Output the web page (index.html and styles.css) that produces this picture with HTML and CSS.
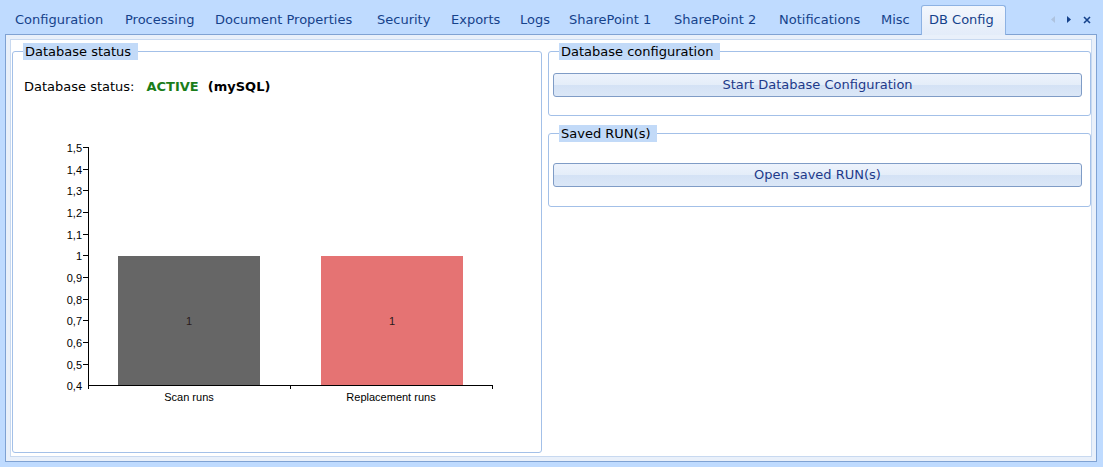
FILE: index.html
```html
<!DOCTYPE html>
<html>
<head>
<meta charset="utf-8">
<link rel="stylesheet" href="styles.css">
</head>
<body>
<div class="tabstrip">
  <div class="tab t-config">Configuration</div>
  <div class="tab t-proc">Processing</div>
  <div class="tab t-doc">Document Properties</div>
  <div class="tab t-sec">Security</div>
  <div class="tab t-exp">Exports</div>
  <div class="tab t-logs">Logs</div>
  <div class="tab t-sp1">SharePoint 1</div>
  <div class="tab t-sp2">SharePoint 2</div>
  <div class="tab t-notif">Notifications</div>
  <div class="tab t-misc">Misc</div>
  <div class="tab selected">DB Config</div>
  <div class="tabnav">
    <svg class="nav-left" width="4" height="7" viewBox="0 0 4 7"><path d="M4 0 L0 3.5 L4 7 Z" fill="#aec3df"/></svg>
    <svg class="nav-right" width="4" height="7" viewBox="0 0 4 7"><path d="M0 0 L4 3.5 L0 7 Z" fill="#15428b"/></svg>
    <svg class="nav-close" width="8" height="8" viewBox="0 0 8 8"><path d="M1 1 L7 7 M7 1 L1 7" stroke="#15428b" stroke-width="1.6"/></svg>
  </div>
</div>
<div class="panel">
  <div class="page">
    <fieldset class="group group-status">
      <legend>Database status</legend>
      <div class="status-line">Database status:<span class="active">ACTIVE</span><span class="engine">(mySQL)</span></div>
      <svg class="chart" width="470" height="270" viewBox="0 0 470 270">
        <g class="axis" shape-rendering="crispEdges" stroke="#000" stroke-width="1">
          <line x1="48.5" y1="7" x2="48.5" y2="249"/>
          <line x1="48" y1="245.5" x2="453" y2="245.5"/>
          <line x1="250.5" y1="245" x2="250.5" y2="249"/>
          <line x1="452.5" y1="245" x2="452.5" y2="249"/>
          <line x1="43" y1="7.5" x2="48" y2="7.5"/>
          <line x1="43" y1="29.5" x2="48" y2="29.5"/>
          <line x1="43" y1="50.5" x2="48" y2="50.5"/>
          <line x1="43" y1="72.5" x2="48" y2="72.5"/>
          <line x1="43" y1="94.5" x2="48" y2="94.5"/>
          <line x1="43" y1="115.5" x2="48" y2="115.5"/>
          <line x1="43" y1="137.5" x2="48" y2="137.5"/>
          <line x1="43" y1="159.5" x2="48" y2="159.5"/>
          <line x1="43" y1="180.5" x2="48" y2="180.5"/>
          <line x1="43" y1="202.5" x2="48" y2="202.5"/>
          <line x1="43" y1="224.5" x2="48" y2="224.5"/>
        </g>
        <g class="ylabels">
          <text x="42" y="11.5">1,5</text>
          <text x="42" y="33.5">1,4</text>
          <text x="42" y="54.5">1,3</text>
          <text x="42" y="76.5">1,2</text>
          <text x="42" y="98.5">1,1</text>
          <text x="42" y="119.5">1</text>
          <text x="42" y="141.5">0,9</text>
          <text x="42" y="163.5">0,8</text>
          <text x="42" y="184.5">0,7</text>
          <text x="42" y="206.5">0,6</text>
          <text x="42" y="228.5">0,5</text>
          <text x="42" y="249.5">0,4</text>
        </g>
        <rect x="78" y="116" width="142" height="129" fill="#666666"/>
        <rect x="281" y="116" width="142" height="129" fill="#e57373"/>
        <g class="barlabels">
          <text x="149" y="185">1</text>
          <text x="352" y="185">1</text>
        </g>
        <g class="xlabels">
          <text x="149" y="261">Scan runs</text>
          <text x="351" y="261">Replacement runs</text>
        </g>
      </svg>
    </fieldset>
    <div class="right-col">
      <fieldset class="group group-config">
        <legend>Database configuration</legend>
        <button class="btn">Start Database Configuration</button>
      </fieldset>
      <fieldset class="group group-saved">
        <legend>Saved RUN(s)</legend>
        <button class="btn">Open saved RUN(s)</button>
      </fieldset>
    </div>
  </div>
</div>
</body>
</html>
```
FILE: styles.css
```css
html, body {
  margin: 0;
  padding: 0;
}
body {
  background: #bfdbff;
  font-family: "DejaVu Sans", Verdana, sans-serif;
  font-size: 13px;
  width: 1103px;
  height: 467px;
  overflow: hidden;
}
.tabstrip {
  display: flex;
  align-items: flex-end;
  height: 34px;
  padding-left: 5px;
  position: relative;
  z-index: 2;
}
.tab {
  box-sizing: border-box;
  flex: none;
  height: 29px;
  line-height: 29px;
  padding: 0 0 0 10px;
  color: #15428b;
  white-space: nowrap;
}
.t-config { width: 110px; }
.t-proc { width: 90px; }
.t-doc { width: 162px; }
.t-sec { width: 74px; }
.t-exp { width: 69px; }
.t-logs { width: 49px; }
.t-sp1 { width: 105px; }
.t-sp2 { width: 105px; }
.t-notif { width: 102px; }
.t-misc { width: 50px; }
.tab.selected {
  width: 85px;
  height: 30px;
  line-height: 28px;
  padding: 0 0 0 7px;
  margin-bottom: -1px;
  border: 1px solid #8db2e3;
  border-bottom: none;
  border-radius: 3px 3px 0 0;
  background: linear-gradient(#f3f7fd, #e3ecf9);
}
.tabnav {
  margin-left: auto;
  display: flex;
  align-items: center;
  height: 29px;
  padding-right: 12px;
}
.nav-left { margin-right: 12px; }
.nav-right { margin-right: 12px; }
.panel {
  margin: 0 6px 0 5px;
  height: 428px;
  box-sizing: border-box;
  border: 1px solid #7fa2d3;
  background: #e9f0fa;
  padding: 4px;
  position: relative;
  z-index: 1;
}
.page {
  height: 100%;
  box-sizing: border-box;
  background: #fff;
  border: 1px solid #c8d9f0;
  display: flex;
  align-items: flex-start;
  gap: 6px;
  padding: 3px 0 3px 1px;
}
.group {
  margin: 0;
  border: 1px solid #a3c0e8;
  border-radius: 3px;
  min-width: 0;
  box-sizing: border-box;
}
.group legend {
  background: #c2daf8;
  color: #000;
  height: 17px;
  line-height: 17px;
  padding: 0 7px 0 2px;
}
.group-status {
  width: 530px;
  align-self: stretch;
  padding: 18px 10px 0 10px;
}
.status-line {
  height: 18px;
  line-height: 18px;
  margin-left: 1px;
  color: #000;
}
.active {
  color: #1a7d1a;
  font-weight: bold;
  margin-left: 12px;
}
.engine {
  font-weight: bold;
  margin-left: 9px;
}
.chart {
  display: block;
  margin: 44px 0 0 17px;
  font-family: "Liberation Sans", Arial, sans-serif;
  font-size: 11px;
}
.ylabels text {
  text-anchor: end;
  fill: #000;
}
.barlabels text {
  text-anchor: middle;
  fill: #2a1a1a;
}
.xlabels text {
  text-anchor: middle;
  fill: #000;
}
.right-col {
  width: 543px;
  display: flex;
  flex-direction: column;
  gap: 9px;
}
.group-config,
.group-saved {
  width: 100%;
  padding-left: 4px;
  padding-right: 8px;
}
.group-config legend,
.group-saved legend {
  margin-left: 6px;
}
.group-config {
  padding-top: 13px;
  padding-bottom: 18px;
}
.group-saved {
  padding-top: 21px;
  padding-bottom: 19px;
}
.btn {
  display: block;
  width: 100%;
  height: 24px;
  margin: 0;
  padding: 0;
  border: 1px solid #7f9cc6;
  border-radius: 3px;
  background: linear-gradient(#edf3fc 0%, #e4edf9 50%, #d4e2f5 51%, #dbe7f7 100%);
  color: #1e3a8a;
  font-family: "DejaVu Sans", Verdana, sans-serif;
  font-size: 13px;
  line-height: 22px;
}
```
